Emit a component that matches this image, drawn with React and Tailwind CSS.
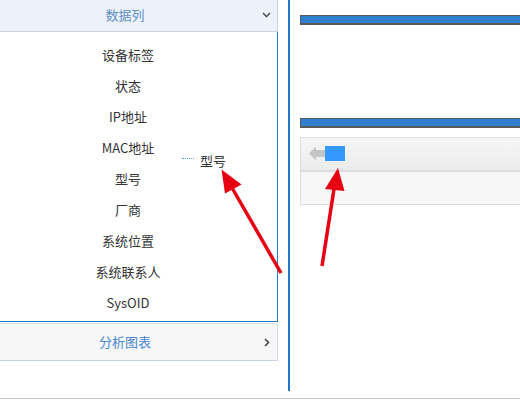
import React from 'react'

const columns = ['设备标签', '状态', 'IP地址', 'MAC地址', '型号', '厂商', '系统位置', '系统联系人', 'SysOID']

const App = () => {
  return (
    <div className="relative w-[520px] h-[406px] overflow-hidden bg-white font-['Noto_Sans_CJK_SC','Noto_Sans',sans-serif] text-[13px] text-[#333]">
      <div className="flex h-[391px]">
        {/* left accordion */}
        <div className="w-[278px] shrink-0 flex flex-col">
          <div className="h-[32px] flex items-center bg-[#edf2fa] border-b border-r border-[#cbd5e2]">
            <span className="w-[250px] text-center text-[#5e8ec6] leading-none -mt-[2px]">数据列</span>
            <svg className="ml-[12px] -mt-[2px]" width="9" height="6" viewBox="0 0 9 6">
              <polyline points="1,1 4.5,4.5 8,1" fill="none" stroke="#555" strokeWidth="1.6" />
            </svg>
          </div>
          <div className="pt-[7px] pb-[3px] border-r border-b border-[#2f7bcb]">
            {columns.map((c) => (
              <div key={c} className="h-[31px] flex items-center justify-center pr-[21px] leading-none">
                {c}
              </div>
            ))}
          </div>
          <div className="mt-px h-[38px] flex items-center bg-[#f7f7f7] border-y border-r border-t-[#dde3ea] border-b-[#c5d2e4] border-r-[#cfd8e4]">
            <span className="w-[250px] text-center text-[#4a88d2] leading-none -mt-px">分析图表</span>
            <svg className="ml-[14px]" width="6" height="9" viewBox="0 0 6 9">
              <polyline points="1,1 4.5,4.5 1,8" fill="none" stroke="#444" strokeWidth="1.6" />
            </svg>
          </div>
        </div>

        {/* splitter */}
        <div className="ml-[10px] w-[2px] shrink-0 bg-[#1e78cf]" />

        {/* right side */}
        <div className="ml-[10px] flex-1 pt-[15px] flex flex-col">
          <div className="h-[10px] bg-[#2f7fcc] border-t border-l border-b-2 border-[#5a5a5a]" />
          <div className="mt-[93px] h-[10px] bg-[#2f7fcc] border-t border-l border-b-2 border-[#5a5a5a]" />
          <div className="mt-[9px] border-y border-l border-[#dcdcdc]">
            <div className="h-[34px] pl-[8px] pt-[8px] flex items-start bg-gradient-to-b from-[#f6f6f6] to-[#ececec] border-b-2 border-[#dcdcdc]">
              <svg width="16" height="16" viewBox="0 0 16 16">
                <polygon points="0,7.5 7,0.5 7,4 16,4 16,11 7,11 7,14.5" fill="#c6c6c6" />
              </svg>
              <div className="w-[20px] h-[15px] bg-[#3399ff]" />
            </div>
            <div className="h-[32px] bg-[#f7f7f7]" />
          </div>
        </div>
      </div>
      <div className="mt-[7px] h-px bg-[#c9c9c9]" />

      {/* drag ghost */}
      <div className="absolute left-[182px] top-[154px] flex items-center">
        <div className="w-[12px] border-t border-dotted border-[#5b9fd2] -mt-[4px]" />
        <span className="ml-[6px] leading-none">型号</span>
      </div>

      {/* annotation arrows */}
      <svg className="absolute inset-0 pointer-events-none" width="520" height="406" viewBox="0 0 520 406">
        <line x1="281" y1="273" x2="231" y2="186" stroke="#e60012" strokeWidth="3.5" />
        <polygon points="221.5,169.5 241.5,184.5 225,193.5" fill="#e60012" />
        <line x1="322" y1="266" x2="334" y2="189" stroke="#e60012" strokeWidth="3.5" />
        <polygon points="338,168 344.5,191 325,189" fill="#e60012" />
      </svg>
    </div>
  )
}

export default App
